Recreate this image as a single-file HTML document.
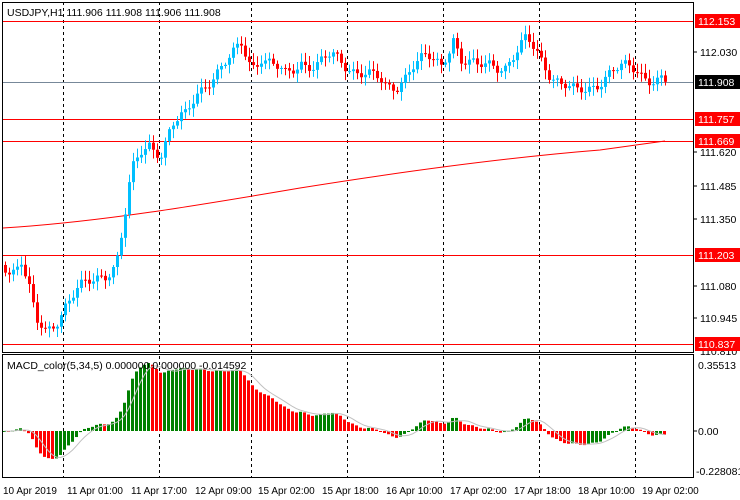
<!DOCTYPE html>
<html><head><meta charset="utf-8"><style>
html,body{margin:0;padding:0;background:#fff;width:740px;height:500px;overflow:hidden}
svg{display:block;font-family:"Liberation Sans",sans-serif}
</style></head><body>
<svg id="s" width="740" height="500" xmlns="http://www.w3.org/2000/svg">
<rect width="740" height="500" fill="#fff"/>
<g id="grid" stroke="#000" stroke-dasharray="3,3" stroke-width="1">
<line x1="63.5" y1="2" x2="63.5" y2="478"/><line x1="159.5" y1="2" x2="159.5" y2="478"/>
<line x1="251.5" y1="2" x2="251.5" y2="478"/><line x1="347.5" y1="2" x2="347.5" y2="478"/>
<line x1="443.5" y1="2" x2="443.5" y2="478"/><line x1="539.5" y1="2" x2="539.5" y2="478"/>
<line x1="635.5" y1="2" x2="635.5" y2="478"/>
</g>
<g stroke="#ff0000" stroke-width="1">
<line x1="2" y1="21.5" x2="694" y2="21.5"/><line x1="2" y1="119.5" x2="694" y2="119.5"/>
<line x1="2" y1="141.5" x2="694" y2="141.5"/><line x1="2" y1="255.5" x2="694" y2="255.5"/>
<line x1="2" y1="344.5" x2="694" y2="344.5"/>
</g>
<line x1="2" y1="82.5" x2="694" y2="82.5" stroke="#778899"/>
<path d="M3,228 C100,222 200,205 300,188 C400,172 500,158 600,150 L665,141" fill="none" stroke="#ff0000"/>
<g id="candles"></g>
<g id="macd"></g>
<path id="sig" fill="none" stroke="#c0c0c0"/>
<g fill="none" stroke="#000">
<rect x="2.5" y="2.5" width="691" height="350"/>
<rect x="2.5" y="354.5" width="691" height="123"/>
</g>
<text x="7" y="16" font-size="10.5" fill="#000">USDJPY,H1  111.906 111.908 111.906 111.908</text>
<text x="7" y="369" font-size="10.5" fill="#000">MACD_color(5,34,5) 0.000000 0.000000 -0.014592</text>
<g font-size="10.5" fill="#000">
<rect x="695" y="14" width="45" height="14" fill="#ff0000"/><text x="698" y="25" fill="#fff">112.153</text>
<text x="700" y="56">112.030</text>
<rect x="695" y="75" width="45" height="14" fill="#000"/><text x="698" y="86" fill="#fff">111.908</text>
<rect x="695" y="112" width="45" height="14" fill="#ff0000"/><text x="698" y="123" fill="#fff">111.757</text>
<rect x="695" y="134" width="45" height="14" fill="#ff0000"/><text x="698" y="145" fill="#fff">111.669</text>
<text x="700" y="156">111.620</text><text x="700" y="190">111.485</text><text x="700" y="223">111.350</text>
<rect x="695" y="248" width="45" height="14" fill="#ff0000"/><text x="698" y="259" fill="#fff">111.203</text>
<text x="700" y="290">111.080</text><text x="700" y="322">110.945</text>
<text x="700" y="355">110.810</text>
<rect x="695" y="337" width="45" height="14" fill="#ff0000"/><text x="698" y="348" fill="#fff">110.837</text>
<text x="698" y="369">0.35513</text><text x="698" y="435">0.00</text><text x="696" y="475">-0.228081</text>
</g>
<g stroke="#000"><line x1="694" y1="52" x2="697" y2="52"/><line x1="694" y1="152" x2="697" y2="152"/><line x1="694" y1="186" x2="697" y2="186"/><line x1="694" y1="219" x2="697" y2="219"/><line x1="694" y1="286" x2="697" y2="286"/><line x1="694" y1="318" x2="697" y2="318"/><line x1="694" y1="431" x2="697" y2="431"/></g>
<g font-size="10" fill="#000">
<text x="3" y="494">10 Apr 2019</text><text x="67" y="494">11 Apr 01:00</text><text x="131" y="494">11 Apr 17:00</text>
<text x="195" y="494">12 Apr 09:00</text><text x="258" y="494">15 Apr 02:00</text><text x="322" y="494">15 Apr 18:00</text>
<text x="386" y="494">16 Apr 10:00</text><text x="450" y="494">17 Apr 02:00</text><text x="514" y="494">17 Apr 18:00</text>
<text x="578" y="494">18 Apr 10:00</text><text x="642" y="494">19 Apr 02:00</text>
</g>
</svg>
<script>
(function(){
var K=[[3,265],[10,270],[20,258],[28,290],[35,325],[45,335],[55,320],[65,300],[75,290],[90,285],[105,272],[115,260],[122,225],[130,175],[140,155],[148,145],[160,150],[170,125],[185,118],[195,95],[205,80],[215,72],[230,60],[240,45],[250,65],[260,55],[270,65],[285,78],[300,60],[315,65],[330,58],[345,65],[360,70],[375,80],[385,90],[395,85],[410,65],[425,60],[440,65],[452,35],[460,60],[475,70],[490,62],[505,65],[515,55],[525,42],[535,50],[548,70],[560,85],[575,95],[590,85],[605,75],[620,70],[635,68],[645,75],[655,80],[665,82]];
function interp(x){for(var i=0;i<K.length-1;i++){if(x<=K[i+1][0]){var a=K[i],b=K[i+1];return a[1]+(b[1]-a[1])*(x-a[0])/(b[0]-a[0]);}}return K[K.length-1][1];}
var ns="http://www.w3.org/2000/svg",g=document.getElementById("candles"),m=document.getElementById("macd");
function el(p,t,a){var e=document.createElementNS(ns,t);for(var k in a)e.setAttribute(k,a[k]);p.appendChild(e);return e;}
var cl=[],xs=[],prev=265;
for(var x=4;x<=666;x+=4){var n=Math.sin(x*1.7)*6+Math.sin(x*0.37)*4;var c=interp(x)+(x>660?0:n);
 var o=prev;var hi=Math.min(o,c)-2-Math.abs(Math.sin(x*2.3))*7,lo=Math.max(o,c)+2+Math.abs(Math.cos(x*1.9))*7;
 var col=c<o?"#00bfff":"#ff0000";
 el(g,"line",{x1:x+1.5,x2:x+1.5,y1:hi,y2:lo,stroke:col});
 el(g,"rect",{x:x,y:Math.min(o,c),width:3,height:Math.max(1,Math.abs(c-o)),fill:col});
 cl.push(-c);xs.push(x);prev=c;}
function ema(a,p){var k=2/(p+1),r=[],v=a[0];for(var i=0;i<a.length;i++){v=a[i]*k+v*(1-k);r.push(v);}return r;}
var e5=ema(cl,5),e34=ema(cl,34),mac=[];for(var i=0;i<cl.length;i++)mac.push(e5[i]-e34[i]);
var mx=0;for(i=0;i<mac.length;i++)mx=Math.max(mx,Math.abs(mac[i]));
var sc=68/mx,z=431,pts=[];
for(i=0;i<mac.length;i++){var h=mac[i]*sc;var col=(i>0&&mac[i]<mac[i-1])?"#ff0000":"#008000";
 el(m,"rect",{x:xs[i]-1,y:h>0?z-h:z,width:3,height:Math.max(1,Math.abs(h)),fill:col});
 var s=0,c2=0;for(var j=Math.max(0,i-4);j<=i;j++){s+=mac[j];c2++;}pts.push((xs[i]+0.5)+","+(z-s/c2*sc).toFixed(1));}
document.getElementById("sig").setAttribute("d","M"+pts.join(" L"));
})();
</script>
</body></html>
